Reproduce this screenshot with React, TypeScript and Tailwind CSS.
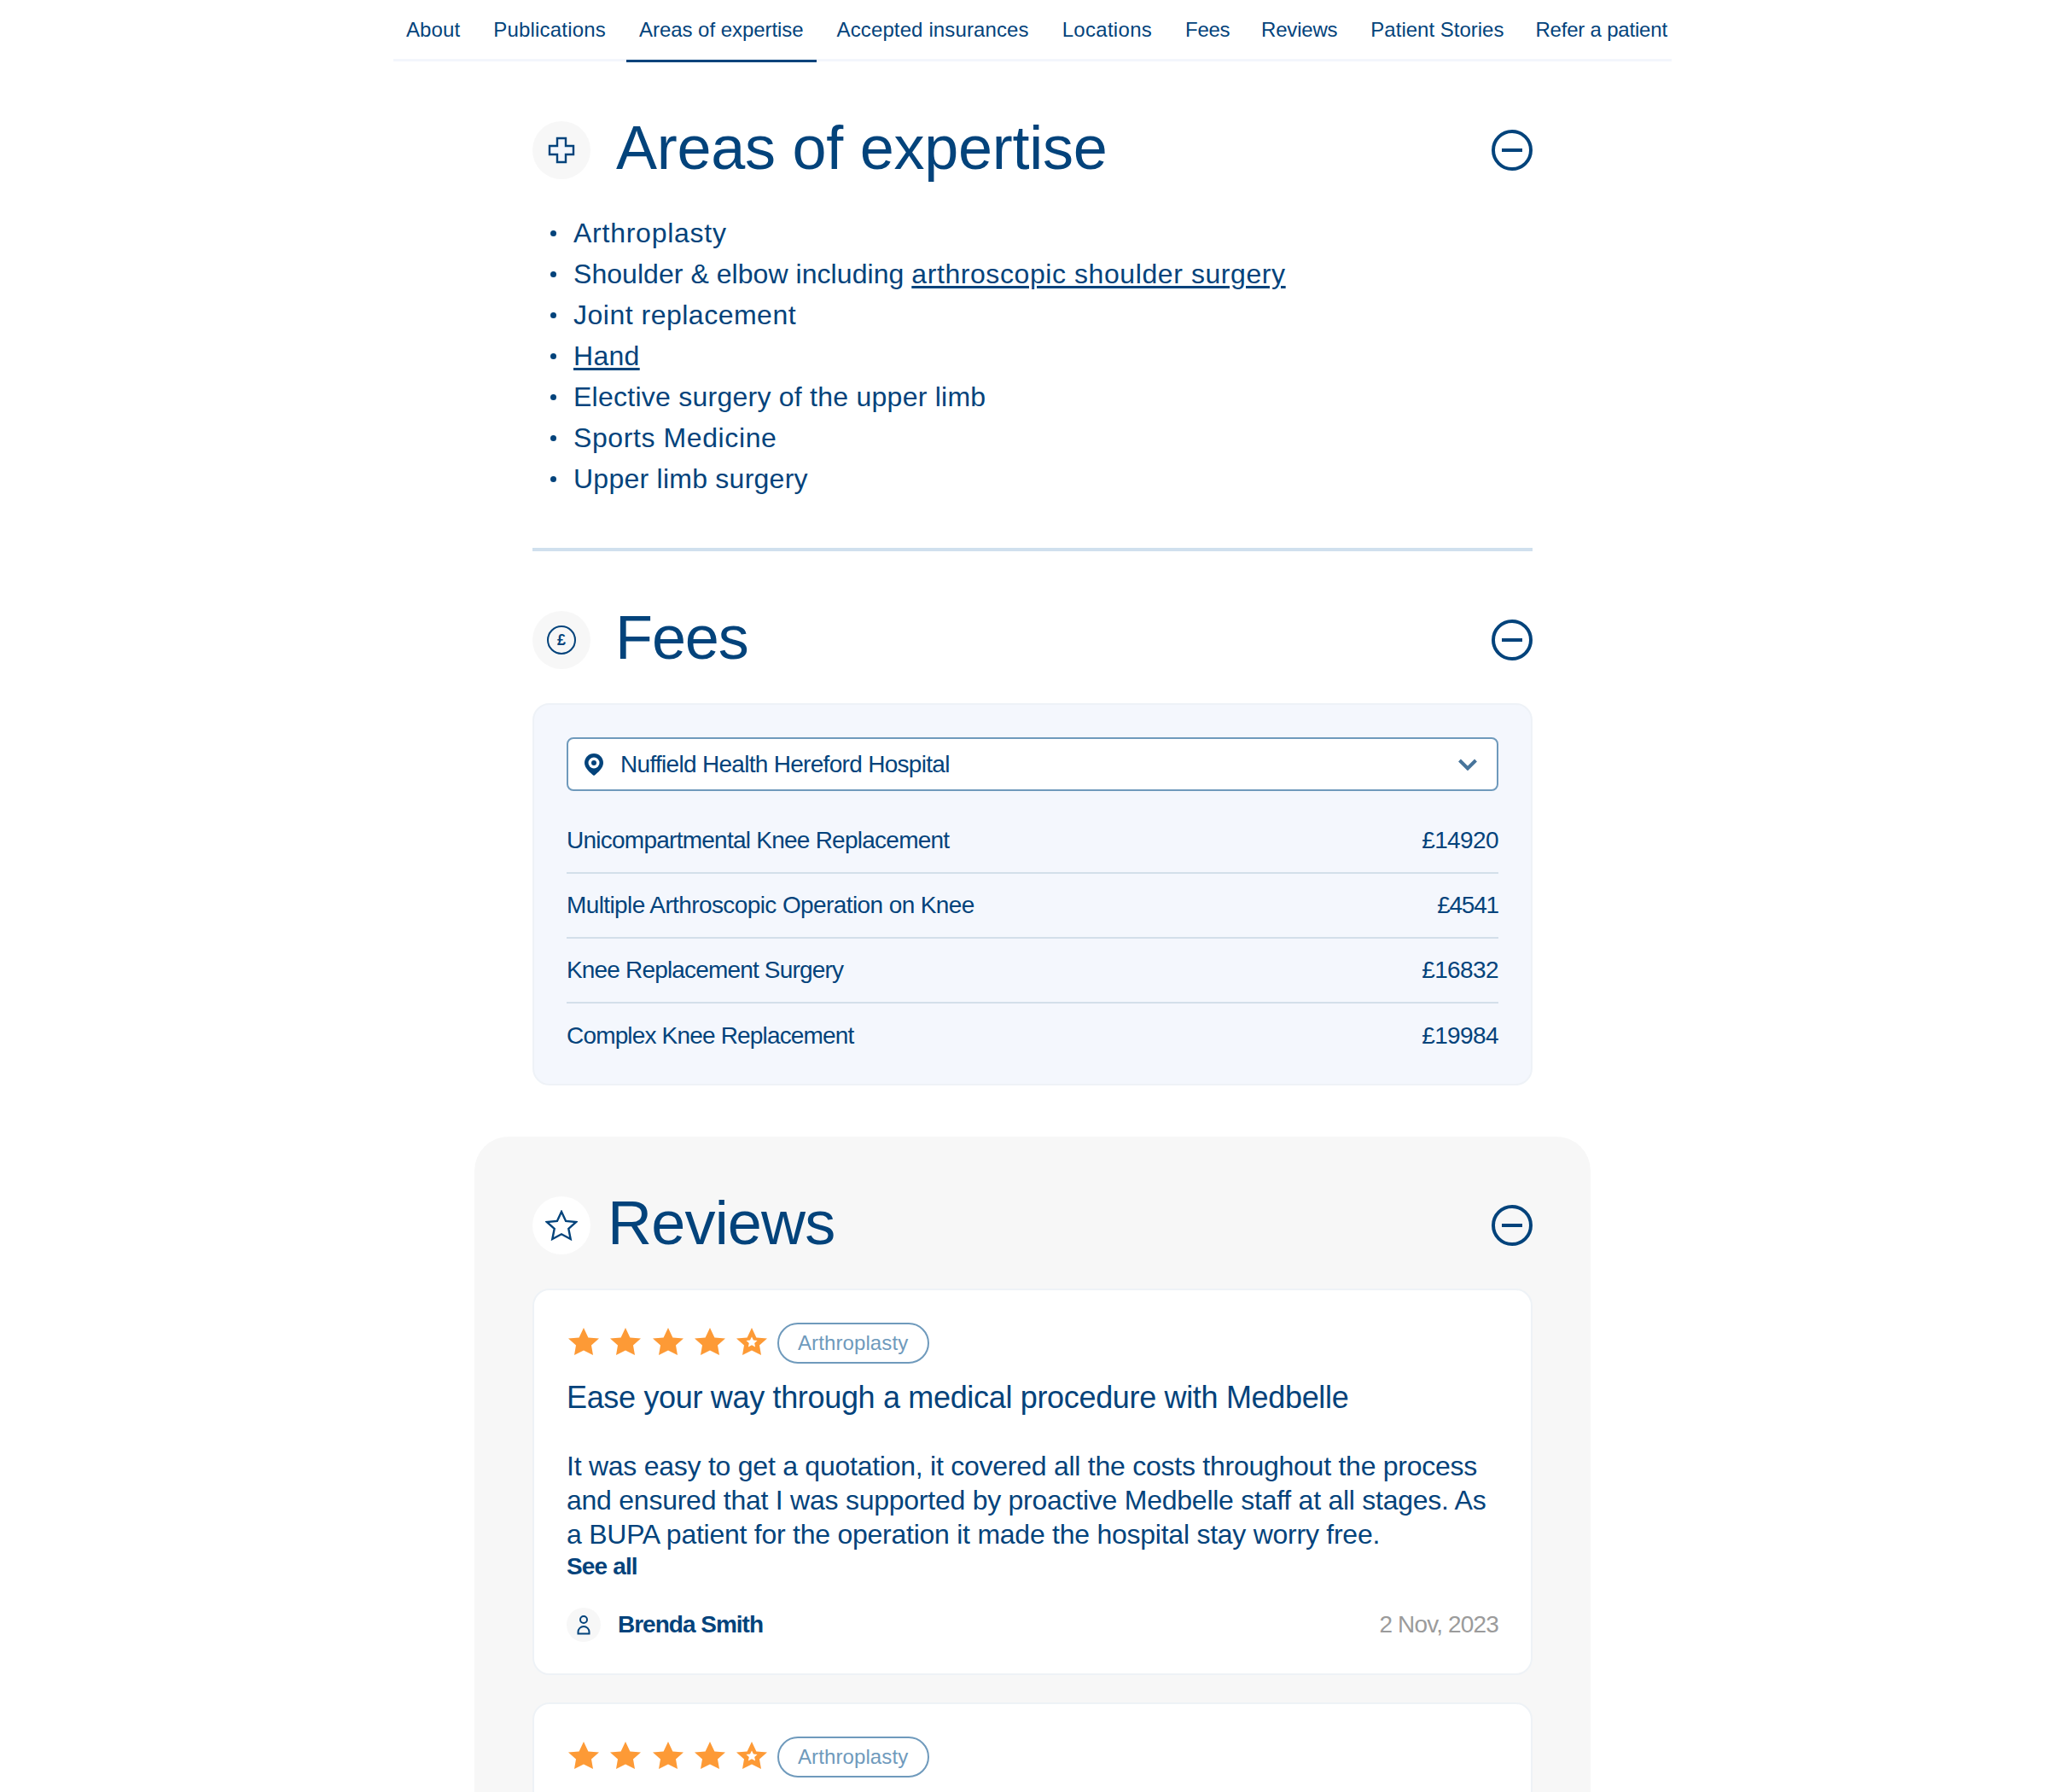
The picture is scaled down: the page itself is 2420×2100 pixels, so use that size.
import type { ReactNode } from "react";

const navItems = [
  { label: "About", style: "tracking-[0.1px]" },
  { label: "Publications", style: "tracking-[0.2px]" },
  { label: "Areas of expertise", style: "tracking-[-0.05px]" },
  { label: "Accepted insurances", style: "tracking-[0.12px]" },
  { label: "Locations", style: "tracking-[0.3px]" },
  { label: "Fees", style: "-mr-[2px] tracking-[-0.35px]" },
  { label: "Reviews", style: "tracking-[-0.2px]" },
  { label: "Patient Stories", style: "-mr-[2px] tracking-[0px]" },
  { label: "Refer a patient", style: "tracking-[-0.2px]" },
];

const expertise: { tracking: string; body: ReactNode }[] = [
  { tracking: "tracking-[0.75px]", body: "Arthroplasty" },
  {
    tracking: "tracking-[0.05px]",
    body: (
      <>
        Shoulder &amp; elbow including{" "}
        <a className="tracking-[0.58px] underline underline-offset-[3px]">arthroscopic shoulder surgery</a>
      </>
    ),
  },
  { tracking: "tracking-[0.5px]", body: "Joint replacement" },
  { tracking: "tracking-[0.3px]", body: <a className="underline underline-offset-[3px]">Hand</a> },
  { tracking: "tracking-[0.25px]", body: "Elective surgery of the upper limb" },
  { tracking: "tracking-[0.6px]", body: "Sports Medicine" },
  { tracking: "tracking-[0.25px]", body: "Upper limb surgery" },
];

const fees = [
  { name: "Unicompartmental Knee Replacement", price: "£14920", tracking: "tracking-[-0.75px]", priceTracking: "tracking-[-0.6px]" },
  { name: "Multiple Arthroscopic Operation on Knee", price: "£4541", tracking: "tracking-[-0.6px]", priceTracking: "tracking-[-1.2px]" },
  { name: "Knee Replacement Surgery", price: "£16832", tracking: "tracking-[-0.83px]", priceTracking: "tracking-[-0.6px]" },
  { name: "Complex Knee Replacement", price: "£19984", tracking: "tracking-[-0.83px]", priceTracking: "tracking-[-0.6px]" },
];

function MinusCircle() {
  return (
    <svg width="48" height="48" viewBox="0 0 48 48" fill="none" className="shrink-0 text-[#03437b]">
      <circle cx="24" cy="24" r="22" stroke="currentColor" strokeWidth="4" />
      <path d="M12 24h24" stroke="currentColor" strokeWidth="4" />
    </svg>
  );
}

function IconDot({ children, white }: { children: ReactNode; white?: boolean }) {
  return (
    <div className={`flex h-[68px] w-[68px] shrink-0 items-center justify-center rounded-full ${white ? "bg-white" : "bg-[#f7f7f7]"}`}>
      {children}
    </div>
  );
}

function SectionHead({ icon, title, titleClass }: { icon: ReactNode; title: string; titleClass: string }) {
  return (
    <div className="flex h-[68px] items-center">
      {icon}
      <h2 className={`${titleClass} mb-[6px] flex-1 text-[72px] leading-[62px] font-normal text-[#03437b]`}>{title}</h2>
      <MinusCircle />
    </div>
  );
}

function Star({ half }: { half?: boolean }) {
  return (
    <svg width="40" height="32" viewBox="-2 0 40 32" className="mb-[4px] shrink-0">
      <path d="M18 0l5.400 11.500L36 12.400l-9 8.100L29 32l-11-5.500L7 32l2-11.500-9-8.100 12.600-.9z" fill="#fd9a36" />
      {half && <path d="M18 10.500l2 4 4.500.5-3.300 3 .9 4.500-4.100-2.200-4.100 2.200.9-4.500-3.300-3 4.500-.5z" fill="#fff" />}
    </svg>
  );
}

function ReviewCard() {
  return (
    <div className="rounded-[20px] border-2 border-[#eef2f6] bg-white px-[38px] pt-[38px] pb-[37px]">
      <div className="flex h-[48px] items-center gap-[9.33px]">
        <Star />
        <Star />
        <Star />
        <Star />
        <Star half />
        <span className="flex h-[48px] w-[178px] items-center justify-center rounded-full border-2 border-[#6f9abc] text-[24px] tracking-[0.1px] text-[#6f9abc]">
          Arthroplasty
        </span>
      </div>
      <h3 className="mt-[16px] text-[36px] leading-[48px] font-normal tracking-[-0.33px] text-[#03437b]">
        Ease your way through a medical procedure with Medbelle
      </h3>
      <p className="mt-[36px] text-[32px] leading-[40px] tracking-[-0.25px] text-[#03437b]">
        It was easy to get a quotation, it covered all the costs throughout the process and ensured that I was supported by proactive Medbelle staff at all stages. As a BUPA patient for the operation it made the hospital stay worry free.
      </p>
      <div className="text-[28px] leading-[36px] font-bold tracking-[-0.85px] text-[#03437b]">See all</div>
      <div className="mt-[30px] flex h-[40px] items-center">
        <div className="flex h-[40px] w-[40px] items-center justify-center rounded-full bg-[#f7f7f7]">
          <svg width="16" height="24" viewBox="0 0 16 24" fill="none" stroke="#03437b" strokeWidth="2">
            <circle cx="8" cy="6" r="4" />
            <path d="M1.500 22.500v-2a6.500 6.500 0 0 1 13 0v2z" />
          </svg>
        </div>
        <span className="ml-[20px] flex-1 text-[28px] font-bold tracking-[-1px] text-[#03437b]">Brenda Smith</span>
        <span className="text-[28px] tracking-[-0.85px] text-[#9b9b9b]">2 Nov, 2023</span>
      </div>
    </div>
  );
}

export default function App() {
  return (
    <div className="h-[2100px] overflow-hidden bg-white font-['Liberation_Sans',sans-serif] text-[#03437b]">
      <nav className="mx-auto flex h-[72px] w-[1498px] gap-[9px] border-b-[3px] border-[#f3f6fc]">
        {navItems.map((item) => (
          <a
            key={item.label}
            className={`flex h-[73px] items-center border-b-[3px] px-[15px] pb-[1px] text-[24px] whitespace-nowrap ${item.style} ${
              item.label === "Areas of expertise" ? "border-[#03437b]" : "border-transparent"
            }`}
          >
            {item.label}
          </a>
        ))}
      </nav>

      <main className="mx-auto w-[1172px] pt-[70px]">
        <SectionHead
          title="Areas of expertise"
          titleClass="ml-[30px] tracking-[-0.27px]"
          icon={
            <IconDot>
              <svg width="32" height="32" viewBox="0 0 32 32" fill="#f3f6fc" stroke="#03437b" strokeWidth="2.4">
                <path d="M11 2h10v9h9v10h-9v9H11v-9H2V11h9z" />
              </svg>
            </IconDot>
          }
        />
        <ul className="mt-[39px] pl-[21px] text-[32px] leading-[48px]">
          {expertise.map((item, i) => (
            <li key={i} className="flex items-center">
              <span className="mr-[20px] h-[7px] w-[7px] rounded-full bg-[#03437b]" />
              <span className={item.tracking}>{item.body}</span>
            </li>
          ))}
        </ul>
        <div className="mt-[57px] h-[4px] bg-[#d0e0ee]" />

        <div className="mt-[70px]">
          <SectionHead
            title="Fees"
            titleClass="ml-[29px] tracking-[-1.1px]"
            icon={
              <IconDot>
                <div className="flex h-[34px] w-[34px] items-center justify-center rounded-full border-2 border-[#03437b] text-[18px] leading-none font-bold">
                  £
                </div>
              </IconDot>
            }
          />
        </div>
        <div className="mt-[40px] rounded-[20px] border-2 border-[#eef2f7] bg-[#f4f7fd] px-[38px] pt-[38px] pb-[18px]">
          <div className="flex h-[63px] items-center rounded-[8px] border-2 border-[#6f9abc] bg-white pr-[23px] pl-[19px]">
            <svg width="22" height="26" viewBox="0 0 22 26" className="shrink-0">
              <path d="M11 0C4.900 0 0 4.900 0 11c0 6 6.500 11.700 11 15 4.500-3.300 11-9 11-15C22 4.900 17.100 0 11 0z" fill="#03437b" />
              <circle cx="11" cy="11" r="6.500" fill="#fff" />
              <circle cx="11" cy="11" r="3" fill="#03437b" />
            </svg>
            <span className="ml-[20px] flex-1 text-[28px] tracking-[-0.7px]">Nuffield Health Hereford Hospital</span>
            <svg width="22" height="14" viewBox="0 0 22 14" fill="none" stroke="#47749b" strokeWidth="4">
              <path d="M1.500 2 11 11.500 20.500 2" />
            </svg>
          </div>
          <div className="mt-[21px]">
            {fees.map((fee, i) => (
              <div
                key={fee.name}
                className={`flex h-[76px] items-center justify-between text-[28px] ${
                  i < fees.length - 1 ? "border-b-2 border-[#d3dfea]" : ""
                }`}
              >
                <span className={fee.tracking}>{fee.name}</span>
                <span className={fee.priceTracking}>{fee.price}</span>
              </div>
            ))}
          </div>
        </div>
      </main>

      <section className="mx-auto mt-[60px] w-[1308px] rounded-[40px] bg-[#f7f7f7] px-[68px] pt-[70px]">
        <SectionHead
          title="Reviews"
          titleClass="ml-[20px] tracking-[-0.8px]"
          icon={
            <IconDot white>
              <svg width="38" height="36" viewBox="-1 -1 38 36" fill="none" stroke="#03437b" strokeWidth="2.4">
                <path d="M18 1l5.100 10.900L35 13.100l-8.700 7.800L28.700 33 18 27.300 7.300 33l2.400-12.100L1 13.100l11.900-1.200z" />
              </svg>
            </IconDot>
          }
        />
        <div className="mt-[40px] flex flex-col gap-[31.5px]">
          <ReviewCard />
          <ReviewCard />
        </div>
      </section>
    </div>
  );
}
